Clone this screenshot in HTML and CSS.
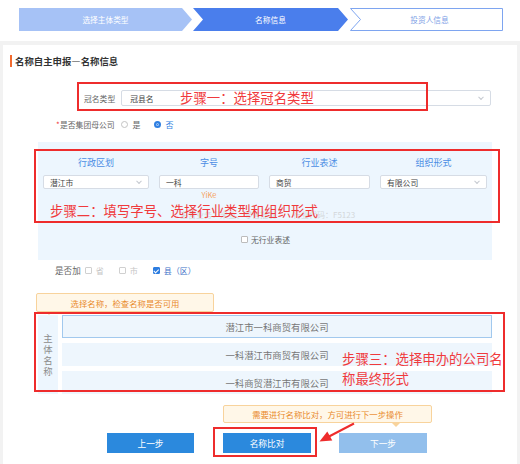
FILE: index.html
```html
<!DOCTYPE html>
<html lang="zh">
<head>
<meta charset="utf-8">
<title>名称自主申报</title>
<link rel="stylesheet" href="styles.css">
</head>
<body>
<div class="steps">
  <div class="step s1">
    <svg class="step-bg" viewBox="0 0 173 23" preserveAspectRatio="none"><polygon points="0,0 163,0 173,11.5 163,23 0,23" fill="#a6c2f6"/></svg>
    <span>选择主体类型</span>
  </div>
  <div class="step s2">
    <svg class="step-bg" viewBox="0 0 155 23" preserveAspectRatio="none"><polygon points="0,0 145,0 155,11.5 145,23 0,23 10,11.5" fill="#4a7eec"/></svg>
    <span>名称信息</span>
  </div>
  <div class="step s3">
    <svg class="step-bg" viewBox="0 0 153 23" preserveAspectRatio="none"><polygon points="0.5,0.5 152.5,0.5 152.5,22.5 0.5,22.5 10.5,11.5" fill="#fff" stroke="#7ea5f0"/></svg>
    <span>投资人信息</span>
  </div>
</div>

<div class="card">
  <div class="heading">名称自主申报—名称信息</div>

  <div class="row-prefix">
    <span class="label">冠名类型</span>
    <div class="select wide"><span>冠县名</span><i class="chev"></i></div>
  </div>

  <div class="row-group">
    <span class="req">*</span><span class="label">是否集团母公司</span>
    <span class="radio"></span><span class="opt">是</span>
    <span class="radio on"></span><span class="opt blue">否</span>
  </div>

  <div class="panel">
    <div class="grid">
      <div class="col-h">行政区划</div>
      <div class="col-h">字号</div>
      <div class="col-h">行业表述</div>
      <div class="col-h">组织形式</div>
      <div class="select"><span>潜江市</span><i class="chev"></i></div>
      <div class="input">一科</div>
      <div class="input">商贸</div>
      <div class="select"><span>有限公司</span><i class="chev"></i></div>
      <div></div>
      <div class="pinyin">YiKe</div>
      <div></div>
      <div></div>
    </div>
    <div class="hint"><span>主营业务：米业、零售批发</span><span>行业代码：F5123</span></div>
    <div class="noind"><span class="cbox"></span><span>无行业表述</span></div>
  </div>

  <div class="row-add">
    <span class="label">是否加</span>
    <span class="cbox dis"></span><span class="opt gray">省</span>
    <span class="cbox dis"></span><span class="opt gray">市</span>
    <span class="cbox on"></span><span class="opt navy">县（区）</span>
  </div>

  <div class="tip tip-top">选择名称，检查名称是否可用</div>

  <div class="names">
    <div class="names-label"><span>主</span><span>体</span><span>名</span><span>称</span></div>
    <div class="names-list">
      <div class="name sel">潜江市一科商贸有限公司</div>
      <div class="name">一科潜江市商贸有限公司</div>
      <div class="name">一科商贸潜江市有限公司</div>
    </div>
  </div>

  <div class="tip tip-bottom">需要进行名称比对，方可进行下一步操作</div>

  <div class="buttons">
    <button class="btn">上一步</button>
    <button class="btn">名称比对</button>
    <button class="btn disabled">下一步</button>
  </div>
</div>

<!-- annotation overlays -->
<div class="mark m1"></div>
<div class="note n1">步骤一：选择冠名类型</div>
<div class="mark m2"></div>
<div class="note n2">步骤二：填写字号、选择行业类型和组织形式</div>
<div class="mark m3"></div>
<div class="note n3">步骤三：选择申办的公司名称最终形式</div>
<div class="mark m4"></div>
<svg class="arrow" viewBox="0 0 520 464" width="520" height="464">
  <line x1="354" y1="423.5" x2="329" y2="436.5" stroke="#ee2c2c" stroke-width="2"/>
  <polygon points="319.5,441.5 332.3,440.6 327.3,431.4" fill="#ee2c2c"/>
</svg>
</body>
</html>
```

FILE: styles.css
```css
html, body {
  margin: 0;
  padding: 0;
}
body {
  width: 520px;
  height: 464px;
  overflow: hidden;
  background: #f2f2f2;
  font-family: "Noto Sans CJK SC", "Noto Sans", sans-serif;
  color: #555;
  position: relative;
}

/* steps */
.steps {
  height: 41px;
  box-sizing: border-box;
  padding: 8px 0 0 19px;
  background: #fff;
  display: flex;
}
.step {
  position: relative;
  height: 23px;
  display: flex;
  align-items: center;
  justify-content: center;
  font-size: 7.7px;
  color: #fff;
}
.step span { position: relative; }
.step-bg {
  position: absolute;
  left: 0;
  top: 0;
  width: 100%;
  height: 100%;
}
.s1 { width: 173px; }
.s2 { width: 155px; margin-left: 1px; }
.s3 { width: 153px; margin-left: 2px; padding-left: 6px; box-sizing: border-box; color: #7f9fe6; }

/* card */
.card {
  margin: 4px 3px 0;
  height: 419px;
  background: #fff;
  display: flex;
  flex-direction: column;
}
.heading {
  margin: 10px 0 0 7px;
  height: 12px;
  line-height: 12px;
  border-left: 2px solid #f26a2e;
  padding-left: 3px;
  font-size: 9.4px;
  font-weight: bold;
  color: #333;
}

.label { font-size: 7.8px; color: #666; }

.row-prefix {
  margin-top: 23px;
  height: 16px;
  padding-left: 81px;
  display: flex;
  align-items: center;
  gap: 6px;
}
.select, .input {
  height: 14px;
  box-sizing: border-box;
  border: 1px solid #d6dce5;
  border-radius: 2px;
  background: #fff;
  display: flex;
  align-items: center;
  padding-left: 6px;
  font-size: 7.8px;
  color: #444;
  position: relative;
}
.select.wide { width: 370px; height: 16px; padding-left: 8px; }
.chev {
  position: absolute;
  right: 7px;
  top: 50%;
  width: 3px;
  height: 3px;
  border-right: 1px solid #c5c9d0;
  border-bottom: 1px solid #c5c9d0;
  transform: translateY(-70%) rotate(45deg);
}

.row-group {
  margin-top: 12px;
  height: 12px;
  padding-left: 53px;
  display: flex;
  align-items: center;
}
.req { color: #f03c3c; font-size: 8px; width: 4px; }
.row-group .label { margin-right: 6px; }
.radio {
  width: 7px;
  height: 7px;
  box-sizing: border-box;
  border: 1px solid #c3c3c3;
  border-radius: 50%;
  margin-right: 5px;
}
.radio.on { border: 2px solid #2f7fe2; background: #2f7fe2; box-shadow: inset 0 0 0 0.5px #fff; }
.opt { font-size: 8px; color: #666; margin-right: 13px; }
.opt.blue { color: #2f7fe2; }
.opt.gray { color: #c6c6c6; }
.opt.navy { color: #3c6fc7; }

/* panel */
.panel {
  margin: 12px 0 0 35px;
  width: 454px;
  box-sizing: border-box;
  padding: 15px 5px 15px;
  background: #edf6fe;
}
.grid {
  display: grid;
  grid-template-columns: 106px 100px 101px 107px;
  column-gap: 10px;
  grid-template-rows: 12px 14px 11px;
  row-gap: 0;
}
.col-h {
  text-align: center;
  font-size: 9px;
  line-height: 12px;
  color: #4b8de4;
  margin-bottom: 6px;
}
.grid .select, .grid .input { margin-top: 6px; }
.grid { grid-template-rows: 12px 20px 11px; }
.pinyin {
  text-align: center;
  font-size: 7.5px;
  line-height: 11px;
  color: #f6a25c;
}
.hint {
  margin-top: 10px;
  height: 10px;
  padding-left: 137px;
  display: flex;
  gap: 17px;
  font-size: 8px;
  line-height: 10px;
  color: #d3d6da;
}
.noind {
  margin-top: 13px;
  height: 12px;
  padding-left: 198px;
  display: flex;
  align-items: center;
  gap: 3px;
  font-size: 7.8px;
  color: #666;
}
.cbox {
  width: 7px;
  height: 7px;
  box-sizing: border-box;
  border: 1px solid #bcbcbc;
  background: #fff;
  border-radius: 1px;
  position: relative;
}
.cbox.dis { border-color: #d0d0d0; }
.cbox.on { background: #2d7de0; border-color: #2d7de0; }
.cbox.on::after {
  content: "";
  position: absolute;
  left: 1.5px;
  top: 0px;
  width: 1.5px;
  height: 3.5px;
  border-right: 1px solid #fff;
  border-bottom: 1px solid #fff;
  transform: rotate(45deg);
}

.row-add {
  margin-top: 4px;
  height: 12px;
  padding-left: 52px;
  display: flex;
  align-items: center;
}
.row-add .label { font-size: 8.6px; margin-right: 4px; }
.row-add .cbox { margin-right: 4px; }
.row-add .opt { margin-right: 15px; }

/* tooltips */
.tip {
  box-sizing: border-box;
  background: #fff7e8;
  border: 1px solid #f8d39c;
  border-radius: 2px;
  color: #e98a2c;
  font-size: 8.4px;
  display: flex;
  align-items: center;
  justify-content: center;
  position: relative;
}
.tip-top {
  margin: 17px 0 0 33px;
  width: 178px;
  height: 19px;
}
.tip-top::after {
  content: "";
  position: absolute;
  left: 9px;
  bottom: -4px;
  border-left: 3px solid transparent;
  border-right: 3px solid transparent;
  border-top: 3px solid #f8d39c;
}
.tip-bottom {
  margin: 11px 0 0 220px;
  width: 209px;
  height: 18px;
}
.tip-bottom::after {
  content: "";
  position: absolute;
  left: 168px;
  bottom: -5px;
  border-left: 4px solid transparent;
  border-right: 4px solid transparent;
  border-top: 4px solid #f8d39c;
}

/* names */
.names {
  margin: 3px 0 0 35px;
  width: 454px;
  display: flex;
  gap: 4px;
}
.names-label {
  width: 20px;
  height: 79px;
  background: #edf6fe;
  display: flex;
  flex-direction: column;
  align-items: center;
  justify-content: center;
  font-size: 9.4px;
  line-height: 11px;
  color: #8c8c8c;
}
.names-list {
  flex: 1;
  display: flex;
  flex-direction: column;
  gap: 5px;
}
.name {
  height: 23px;
  box-sizing: border-box;
  background: #eef6fd;
  display: flex;
  align-items: center;
  justify-content: center;
  font-size: 9.4px;
  color: #777;
}
.name.sel { border: 1px solid #a2c9ee; }

/* buttons */
.buttons {
  margin: 10px 0 0 104px;
  display: flex;
  gap: 28px;
}
.btn {
  width: 88px;
  height: 20px;
  border: none;
  padding: 0;
  background: #2b89dd;
  color: #fff;
  font-family: inherit;
  font-size: 8.7px;
}
.btn:first-child { width: 87px; margin-right: 1px; }
.btn.disabled { background: #92bfec; }

/* annotation overlays */
.mark {
  position: absolute;
  box-sizing: border-box;
  border: 2px solid #ee2c2c;
}
.m1 { left: 77px; top: 82px; width: 351px; height: 29px; }
.m2 { left: 34px; top: 149px; width: 466px; height: 74px; }
.m3 { left: 34px; top: 312px; width: 471px; height: 80px; }
.m4 { left: 213px; top: 427px; width: 104px; height: 30px; }
.note {
  position: absolute;
  color: #f03a3d;
  font-size: 13.4px;
  line-height: 20px;
  white-space: nowrap;
}
.n1 { left: 180px; top: 87px; }
.n2 { left: 50px; top: 200px; }
.n3 { left: 342px; top: 348px; width: 163px; white-space: normal; }
.arrow {
  position: absolute;
  left: 0;
  top: 0;
  pointer-events: none;
}
```
